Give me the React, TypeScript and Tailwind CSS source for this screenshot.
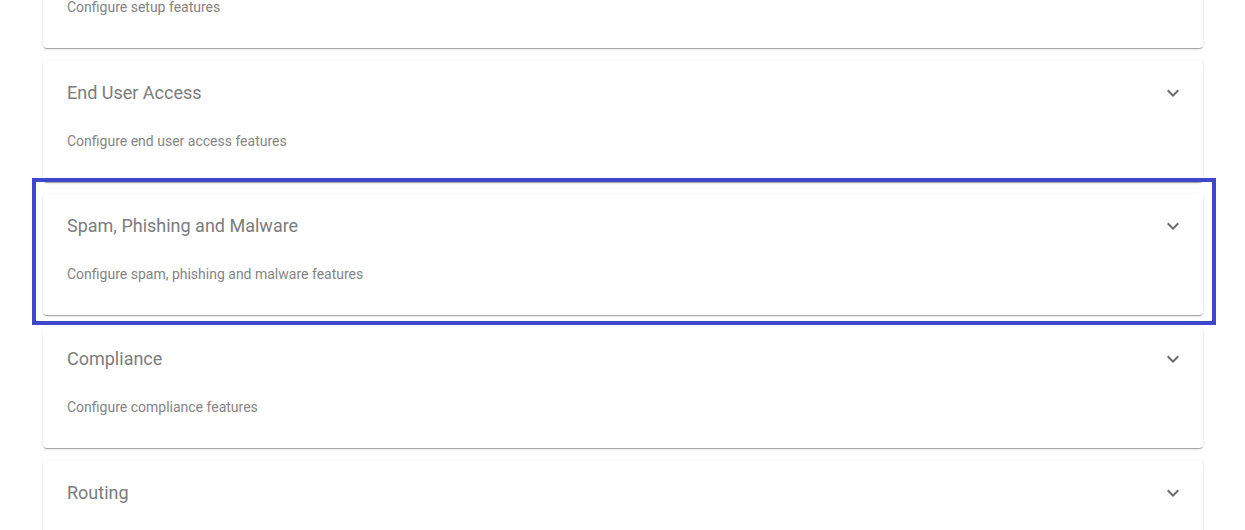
const sections = [
  { title: 'Setup', description: 'Configure setup features' },
  { title: 'End User Access', description: 'Configure end user access features' },
  { title: 'Spam, Phishing and Malware', description: 'Configure spam, phishing and malware features', highlight: true },
  { title: 'Compliance', description: 'Configure compliance features' },
  { title: 'Routing', description: 'Configure routing features' },
];

function ExpandMore() {
  return (
    <svg viewBox="0 0 24 24" className="h-6 w-6 fill-[#6b6b6b]">
      <path d="M16.59 8.59L12 13.17 7.41 8.59 6 10l6 6 6-6z" />
    </svg>
  );
}

export default function App() {
  return (
    <div className="h-[530px] w-full overflow-hidden bg-white font-['Roboto',sans-serif]">
      <div className="-mt-[72.6px] flex flex-col gap-[12.33px] pl-[43px] pr-[42px]">
        {sections.map(section => (
          <div key={section.title} className="relative">
            {section.highlight && (
              <div className="pointer-events-none absolute -top-[16px] -bottom-[10px] -left-[11px] -right-[13px] z-10 border-4 border-[#3f47cc]" />
            )}
            <div className="h-[121px] rounded-[4px] bg-white px-6 pt-5 shadow-[0_2px_1px_-1px_rgba(0,0,0,0.2),0_1px_1px_0_rgba(0,0,0,0.14),0_1px_3px_0_rgba(0,0,0,0.12)]">
              <div className="flex items-center justify-between">
                <h2 className="text-[18px] leading-6 text-[#7c7c7c]">{section.title}</h2>
                <div className="-mr-[6px]">
                  <ExpandMore />
                </div>
              </div>
              <p className="mt-[26px] text-[14px] leading-5 text-[#848484]">{section.description}</p>
            </div>
          </div>
        ))}
      </div>
    </div>
  );
}
